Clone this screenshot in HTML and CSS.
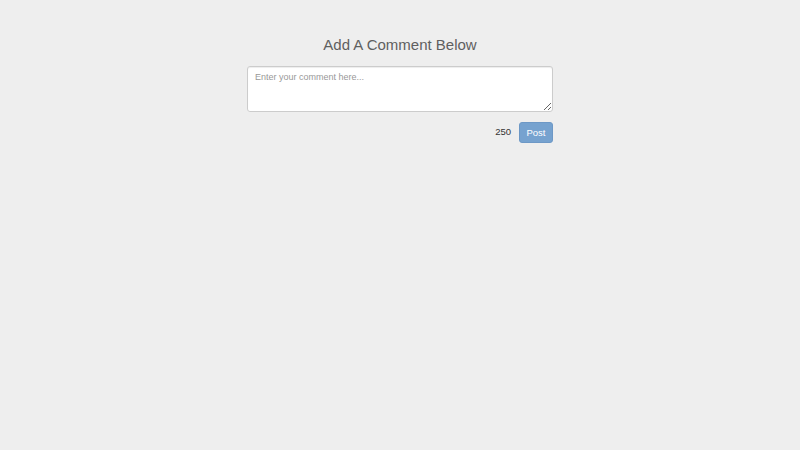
FILE: index.html
```html
<!DOCTYPE html>
<html lang="en">
<head>
<meta charset="UTF-8">
<meta name="viewport" content="width=device-width, initial-scale=1.0">
<title>Comments</title>
<link rel="stylesheet" href="styles.css">
</head>
<body>

<div class="comment-box">
  <h3 class="title">Add A Comment Below</h3>
  <textarea class="comment-input" placeholder="Enter your comment here..."></textarea>
  <div class="comment-actions">
    <span class="counter">250</span>
    <button class="post-button">Post</button>
  </div>
</div>

</body>
</html>
```

FILE: styles.css
```css
body {
  margin: 0;
  background-color: #eeeeee;
  font-family: "Liberation Sans", Arial, sans-serif;
  color: #333;
}
.comment-box {
  width: 306px;
  margin: 0 auto;
  padding-top: 35px;
}
.title {
  margin: 0 0 12px;
  text-align: center;
  font-size: 15px;
  font-weight: normal;
  color: #5f5f5f;
  line-height: 19px;
}
.comment-input {
  display: block;
  width: 100%;
  height: 46px;
  box-sizing: border-box;
  padding: 5px 7px;
  border: 1px solid #ccc;
  border-radius: 3px;
  background: #fff;
  font-family: inherit;
  font-size: 9px;
  color: #555;
  box-shadow: inset 0 1px 1px rgba(0,0,0,.075);
}
.comment-input::placeholder {
  color: #999;
}
.comment-actions {
  display: flex;
  justify-content: flex-end;
  align-items: center;
  margin-top: 10px;
}
.counter {
  font-size: 9.5px;
  margin-right: 8px;
  line-height: 1;
  padding-bottom: 1px;
}
.post-button {
  width: 34px;
  height: 21px;
  padding: 0;
  border: 1px solid #6d98c6;
  border-radius: 3px;
  background-color: #76a2cf;
  color: #fff;
  font-family: inherit;
  font-size: 9.5px;
}
```
